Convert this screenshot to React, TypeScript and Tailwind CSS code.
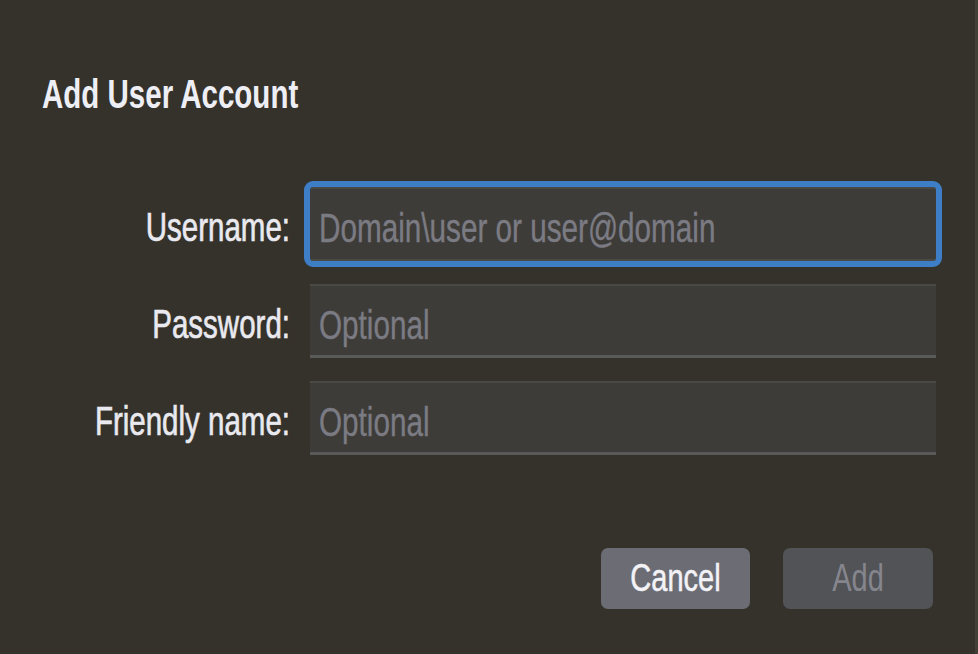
import React from "react";

const font = { fontFamily: '"Liberation Sans", Arial, sans-serif' };

function Stretch({ children, className = "" }: { children: React.ReactNode; className?: string }) {
  return <span className={`inline-block origin-center scale-y-[1.36] ${className}`}>{children}</span>;
}

function Field({ placeholder, focused }: { placeholder: string; focused?: boolean }) {
  return (
    <div
      className={
        focused
          ? "flex h-[74px] items-center rounded-[3px] border-t-2 border-b-2 border-[#4b4946] bg-[#3e3c38] pl-[9px] outline-[6px] outline-solid outline-[#3d7ec6]"
          : "flex h-[74px] items-center border-t-2 border-b-[3px] border-t-[#4b4945] border-b-[#5b5a5a] bg-[#3e3c38] pl-[9px]"
      }
    >
      <Stretch className="translate-y-[4px] text-[29.7px] leading-none text-[#7b7b83] [-webkit-text-stroke:0.3px_#7b7b83]">
        {placeholder}
      </Stretch>
    </div>
  );
}

function Label({ children }: { children: React.ReactNode }) {
  return (
    <div className="flex h-[74px] items-center justify-end">
      <Stretch className="translate-y-[3px] text-[29.5px] leading-none text-[#e9e9ef] [-webkit-text-stroke:0.5px_#e9e9ef]">
        {children}
      </Stretch>
    </div>
  );
}

export default function App() {
  return (
    <div
      className="flex h-[654px] w-[978px] flex-col overflow-hidden border-r-[3px] border-[#423f39] bg-[#35322b] pl-[42px]"
      style={font}
    >
      <div className="mt-[79px] h-[30px] leading-[30px]">
        <Stretch className="text-[29.5px] font-bold leading-none text-[#eeeef5]">Add User Account</Stretch>
      </div>

      <div className="mt-[78px] grid grid-cols-[248px_626px] gap-x-[20px] gap-y-[23px]">
        <Label>Username:</Label>
        <Field placeholder="Domain\user or user@domain" focused />
        <Label>Password:</Label>
        <Field placeholder="Optional" />
        <Label>Friendly name:</Label>
        <Field placeholder="Optional" />
      </div>

      <div className="mt-[93px] flex w-[891px] justify-end gap-[33px]">
        <button className="flex h-[61px] w-[149px] items-center justify-center rounded-[7px] bg-[#6c6d74]">
          <Stretch className="text-[29px] leading-none text-[#f2f2f7] [-webkit-text-stroke:0.4px_#f2f2f7]">Cancel</Stretch>
        </button>
        <button className="flex h-[61px] w-[150px] items-center justify-center rounded-[7px] bg-[#525357]">
          <Stretch className="text-[29px] leading-none text-[#85868d]">Add</Stretch>
        </button>
      </div>
    </div>
  );
}
